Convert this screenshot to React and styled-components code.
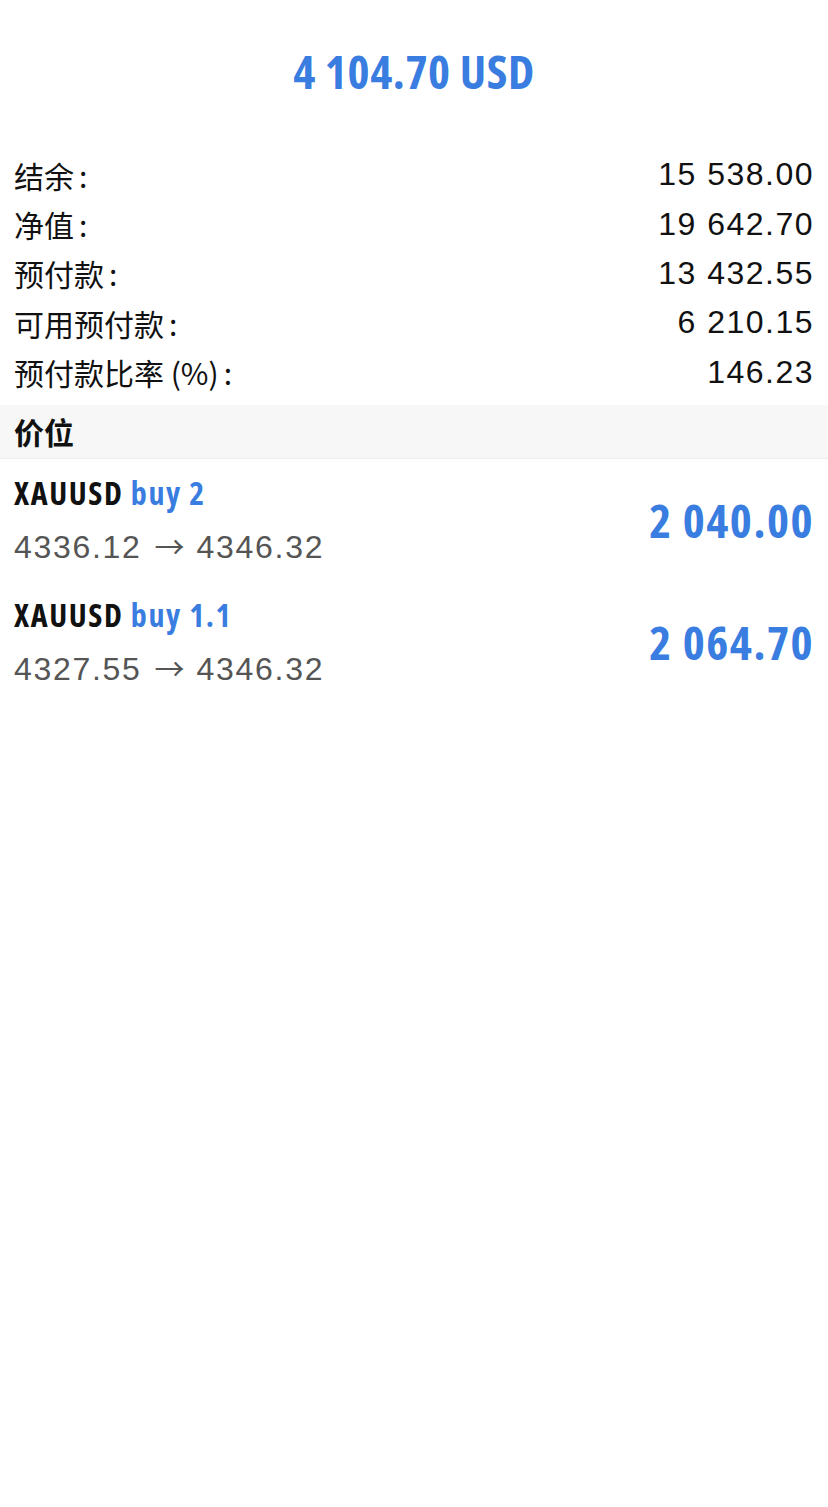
import React from "react";
import styled, { createGlobalStyle } from "styled-components";

const Global = createGlobalStyle`
  html, body { margin: 0; padding: 0; background: #fff; }
  body { font-family: "Liberation Sans", "Noto Sans CJK SC", sans-serif; -webkit-font-smoothing: antialiased; }
`;

const BLUE = "#3a7de0";

const Page = styled.div`
  width: 828px;
  min-height: 1507px;
  background: #fff;
`;

const Header = styled.div`
  height: 140px;
  display: flex;
  justify-content: center;
  align-items: flex-start;
  padding-top: 43px;
  box-sizing: border-box;
`;

const Condensed = styled.div`
  font-family: "Open Sans", sans-serif;
  font-stretch: 75%;
  font-weight: 700;
  letter-spacing: ${(p) => p.$track || "0px"};
`;

const Total = styled(Condensed)`
  font-size: 47px;
  line-height: 56px;
  color: ${BLUE};
`;

const Summary = styled.div`
  display: flex;
  flex-direction: column;
  padding: 10px 14px 0 14px;
`;

const SumRow = styled.div`
  display: flex;
  justify-content: space-between;
  align-items: center;
  height: 49.4px;
`;

const Label = styled.span`
  font-family: "Noto Sans CJK SC", sans-serif;
  font-size: 30px;
  color: #111;
`;

const Colon = styled.span`
  margin-left: 5px;
`;

const Value = styled.span`
  font-family: "Liberation Sans", sans-serif;
  font-size: 32px;
  letter-spacing: 1.5px;
  color: #111;
`;

const Section = styled.div`
  margin-top: 8px;
  height: 54px;
  background: #f7f7f7;
  border-bottom: 1px solid #eee;
  display: flex;
  align-items: center;
  padding: 0 14px;
  font-family: "Noto Sans CJK SC", sans-serif;
  font-weight: 700;
  font-size: 30px;
  color: #111;
  box-sizing: border-box;
`;

const Positions = styled.div`
  display: flex;
  flex-direction: column;
`;

const Position = styled.div`
  display: flex;
  justify-content: space-between;
  align-items: center;
  height: 122px;
  padding: 0 14px;
  box-sizing: border-box;
`;

const Left = styled.div`
  display: flex;
  flex-direction: column;
  gap: 6px;
`;

const Title = styled(Condensed)`
  font-size: 32px;
  line-height: 46px;
  color: #111;
`;

const Side = styled.span`
  color: ${BLUE};
`;

const Prices = styled.div`
  font-family: "Liberation Sans", sans-serif;
  font-size: 32px;
  line-height: 46px;
  letter-spacing: 1.7px;
  color: #555;
`;

const Arrow = styled.span`
  font-family: "Noto Sans CJK SC", sans-serif;
  font-size: 30px;
  margin: 0 12px 0 13px;
  letter-spacing: 0;
`;

const Profit = styled(Condensed)`
  font-size: 47px;
  color: ${BLUE};
`;

const summary = [
  ["结余", "15 538.00"],
  ["净值", "19 642.70"],
  ["预付款", "13 432.55"],
  ["可用预付款", "6 210.15"],
  ["预付款比率 (%)", "146.23"],
];

const positions = [
  { sym: "XAUUSD", side: "buy 2", from: "4336.12", to: "4346.32", profit: "2 040.00" },
  { sym: "XAUUSD", side: "buy 1.1", from: "4327.55", to: "4346.32", profit: "2 064.70" },
];

export default function App() {
  return (
    <Page>
      <Global />
      <Header>
        <Total $track="0.6px">4 104.70 USD</Total>
      </Header>
      <Summary>
        {summary.map(([l, v]) => (
          <SumRow key={l}>
            <Label>
              {l}
              <Colon>:</Colon>
            </Label>
            <Value>{v}</Value>
          </SumRow>
        ))}
      </Summary>
      <Section>价位</Section>
      <Positions>
        {positions.map((p, i) => (
          <Position key={i}>
            <Left>
              <Title $track="1.6px">
                {p.sym} <Side>{p.side}</Side>
              </Title>
              <Prices>
                {p.from}
                <Arrow>→</Arrow>
                {p.to}
              </Prices>
            </Left>
            <Profit $track="1.5px">{p.profit}</Profit>
          </Position>
        ))}
      </Positions>
    </Page>
  );
}
